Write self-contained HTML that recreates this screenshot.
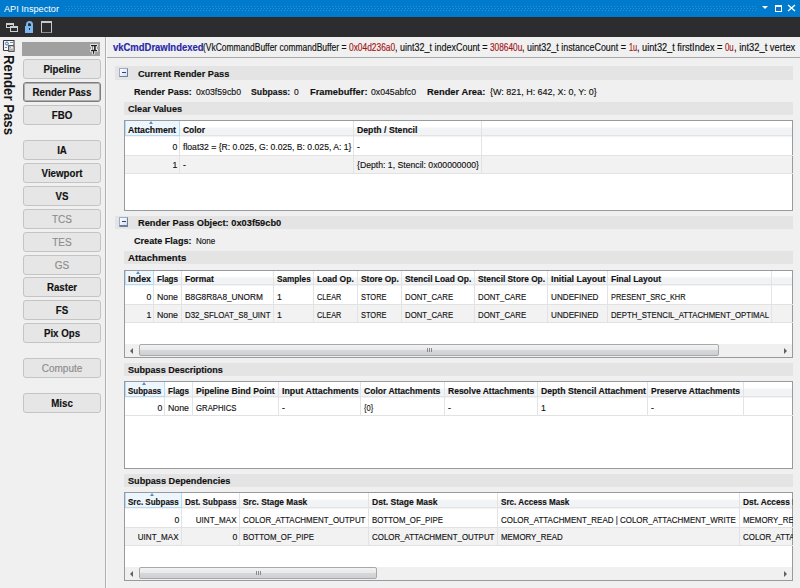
<!DOCTYPE html>
<html><head><meta charset="utf-8">
<style>
*{margin:0;padding:0;box-sizing:border-box}
html,body{width:800px;height:588px;overflow:hidden;background:#f0f0f0;font-family:"Liberation Sans",sans-serif;color:#000}
.a{position:absolute}
.t{position:absolute;white-space:nowrap;line-height:11px;color:#111;-webkit-text-stroke:0.15px currentColor}
.btn{position:absolute;left:23px;width:78px;height:20px;border:1px solid #c4c4c4;border-radius:3px;background:#e6e6e6}
.btn.sel{border:1px solid #7c7c7c;box-shadow:inset 0 0 0 1px #b0b0b0}
.mb{position:absolute;width:9px;height:9px;border:1px solid #9aacc8;border-right-color:#6d7f9e;border-bottom-color:#6d7f9e;border-radius:1px;background:linear-gradient(135deg,#ffffff,#d3ddef)}
.mb:after{content:"";position:absolute;left:2px;top:3px;width:4px;height:1px;background:#34466e}
</style></head><body>

<div class="a" style="left:0px;top:0px;width:800px;height:17px;background:#007acc;"></div>
<div class="t" style="top:2.97px;font-size:9.6px;color:#ffffff;left:4.00px;transform:scaleX(0.9543913716078979);transform-origin:0 0;-webkit-text-stroke:0">API Inspector</div>
<div class="a" style="left:64px;top:5px;width:693px;height:7px;background-image:radial-gradient(circle at 1.5px 1.5px,rgba(255,255,255,.18) 0.55px,transparent 1px),radial-gradient(circle at 3px 3.5px,rgba(255,255,255,.18) 0.55px,transparent 1px);background-size:3px 4px;"></div>
<div class="a" style="left:762px;top:6px;width:0;height:0;border-left:3.5px solid transparent;border-right:3.5px solid transparent;border-top:3.5px solid #fff"></div>
<div class="a" style="left:775px;top:5px;width:7px;height:7px;border:1px solid #fff;border-top-width:2px"></div>
<svg class="a" style="left:787px;top:4px" width="9" height="8"><path d="M1 1L8 7M8 1L1 7" stroke="#fff" stroke-width="1.4"/></svg>
<div class="a" style="left:0px;top:17px;width:800px;height:20px;background:#2d2d30;"></div>
<div class="a" style="left:6px;top:23px;width:8px;height:5px;border:1px solid #cfcfcf;border-top-width:2px"></div>
<div class="a" style="left:10px;top:26px;width:8px;height:6px;border:1px solid #cfcfcf;border-top-width:2px;background:#2d2d30"></div>
<div class="a" style="left:25.5px;top:21px;width:7px;height:7px;border:2px solid #79b8f3;border-bottom:none;border-radius:3.5px 3.5px 0 0"></div>
<div class="a" style="left:25px;top:26px;width:8px;height:7px;background:#79b8f3"></div>
<div class="a" style="left:28.5px;top:28px;width:1.5px;height:1.5px;background:#2d2d30;"></div>
<div class="a" style="left:41px;top:21px;width:11px;height:12px;border:1px solid #c8c8c8;border-top-width:2px;border-bottom-color:#8a8a8a"></div>
<svg class="a" style="left:2px;top:39px" width="14" height="14"><rect x="1.8" y="1.8" width="10" height="9.4" fill="#fafafa"/><path d="M1.5 11.5H6.5M1.5 1.5V11.5M1.5 1.5H12V6" fill="none" stroke="#3c3c3c" stroke-width="1.1"/><circle cx="4.9" cy="4.6" r="1.5" fill="#dfeaf8" stroke="#3a7bd0" stroke-width="1"/><path d="M8 3.5H11.5M3 8.5H5" stroke="#8a8a8a" stroke-width="1"/><rect x="6.7" y="6.7" width="5.4" height="5.6" fill="#f0f0f0" stroke="#3c3c3c" stroke-width="1.1"/><rect x="7.3" y="9.5" width="4.2" height="2.3" fill="#b0b0b0"/><path d="M7.5 7.5L9 9" stroke="#6aa0e0" stroke-width="1"/></svg>
<div class="a" style="left:17px;top:55.2px;transform-origin:0 0;transform:rotate(90deg) scaleX(0.881);font-size:15px;font-weight:bold;line-height:15px;white-space:nowrap;color:#151515">Render Pass</div>
<div class="a" style="left:105px;top:37px;width:1px;height:551px;background:#b0b0b0;"></div>
<div class="a" style="left:106px;top:37px;width:1px;height:551px;background:#fafafa;"></div>
<div class="a" style="left:22px;top:42px;width:78px;height:14px;background:#a0a0a0;"></div>
<svg class="a" style="left:89px;top:43px" width="10" height="12"><g fill="none" stroke="#f4f4f4" stroke-width="2.6" stroke-linecap="square"><path d="M2.5 2.5H7.5M3.5 2.5V7.5M6.5 2.5V7.5M2.5 7.5H7.5M4.5 7.5V10"/></g><rect x="2" y="2" width="6" height="1.2" fill="#1e1e1e"/><rect x="3.5" y="2.5" width="3.2" height="5" fill="#1e1e1e"/><rect x="2" y="7" width="6" height="1.2" fill="#1e1e1e"/><rect x="4" y="8" width="1.1" height="2.8" fill="#1e1e1e"/><rect x="4.1" y="3.2" width="1" height="3.6" fill="#fff"/></svg>
<div class="btn " style="top:59px"></div>
<div class="t" style="left:23px;width:78px;text-align:center;top:63.5px;font-size:10px;font-weight:bold;transform:scaleX(0.97)">Pipeline</div>
<div class="btn sel" style="top:82px"></div>
<div class="t" style="left:23px;width:78px;text-align:center;top:86.5px;font-size:10px;font-weight:bold;transform:scaleX(0.97)">Render Pass</div>
<div class="btn " style="top:105px"></div>
<div class="t" style="left:23px;width:78px;text-align:center;top:109.5px;font-size:10px;font-weight:bold;transform:scaleX(0.97)">FBO</div>
<div class="btn " style="top:140px"></div>
<div class="t" style="left:23px;width:78px;text-align:center;top:144.5px;font-size:10px;font-weight:bold;transform:scaleX(0.97)">IA</div>
<div class="btn " style="top:163px"></div>
<div class="t" style="left:23px;width:78px;text-align:center;top:167.5px;font-size:10px;font-weight:bold;transform:scaleX(0.97)">Viewport</div>
<div class="btn " style="top:186px"></div>
<div class="t" style="left:23px;width:78px;text-align:center;top:190.5px;font-size:10px;font-weight:bold;transform:scaleX(0.97)">VS</div>
<div class="btn dis" style="top:209px"></div>
<div class="t" style="left:23px;width:78px;text-align:center;top:213.5px;font-size:10px;color:#8d8d8d">TCS</div>
<div class="btn dis" style="top:232px"></div>
<div class="t" style="left:23px;width:78px;text-align:center;top:236.5px;font-size:10px;color:#8d8d8d">TES</div>
<div class="btn dis" style="top:255px"></div>
<div class="t" style="left:23px;width:78px;text-align:center;top:259.5px;font-size:10px;color:#8d8d8d">GS</div>
<div class="btn " style="top:277px"></div>
<div class="t" style="left:23px;width:78px;text-align:center;top:281.5px;font-size:10px;font-weight:bold;transform:scaleX(0.97)">Raster</div>
<div class="btn " style="top:300px"></div>
<div class="t" style="left:23px;width:78px;text-align:center;top:304.5px;font-size:10px;font-weight:bold;transform:scaleX(0.97)">FS</div>
<div class="btn " style="top:323px"></div>
<div class="t" style="left:23px;width:78px;text-align:center;top:327.5px;font-size:10px;font-weight:bold;transform:scaleX(0.97)">Pix Ops</div>
<div class="btn dis" style="top:358px"></div>
<div class="t" style="left:23px;width:78px;text-align:center;top:362.5px;font-size:10px;color:#8d8d8d">Compute</div>
<div class="btn " style="top:393px"></div>
<div class="t" style="left:23px;width:78px;text-align:center;top:397.5px;font-size:10px;font-weight:bold;transform:scaleX(0.97)">Misc</div>
<div class="t" style="top:41.73px;font-size:10px;font-weight:bold;color:#2828a8;left:112.50px;transform:scaleX(0.947);transform-origin:0 0;">vkCmdDrawIndexed</div>
<div class="t" style="top:41.73px;font-size:10px;left:203.00px;transform:scaleX(0.8463596012092925);transform-origin:0 0;">(VkCommandBuffer&#32;commandBuffer&#32;=&#32;</div>
<div class="t" style="top:41.73px;font-size:10px;color:#a31515;left:348.75px;transform:scaleX(0.8382669308009736);transform-origin:0 0;">0x04d236a0</div>
<div class="t" style="top:41.73px;font-size:10px;left:394.90px;transform:scaleX(0.8979454540626193);transform-origin:0 0;">,&#32;uint32_t&#32;indexCount&#32;=&#32;</div>
<div class="t" style="top:41.73px;font-size:10px;color:#a31515;left:490.00px;transform:scaleX(0.8296743431878556);transform-origin:0 0;">308640u</div>
<div class="t" style="top:41.73px;font-size:10px;left:522.30px;transform:scaleX(0.8926753399223526);transform-origin:0 0;">,&#32;uint32_t&#32;instanceCount&#32;=&#32;</div>
<div class="t" style="top:41.73px;font-size:10px;color:#a31515;left:628.75px;transform:scaleX(0.7416980389953363);transform-origin:0 0;">1u</div>
<div class="t" style="top:41.73px;font-size:10px;left:637.00px;transform:scaleX(0.917730182112083);transform-origin:0 0;">,&#32;uint32_t&#32;firstIndex&#32;=&#32;</div>
<div class="t" style="top:41.73px;font-size:10px;color:#a31515;left:725.00px;transform:scaleX(0.786649435298084);transform-origin:0 0;">0u</div>
<div class="t" style="top:41.73px;font-size:10px;left:733.75px;transform:scaleX(0.9338180293580954);transform-origin:0 0;">,&#32;int32_t&#32;vertex</div>
<div class="a" style="left:107px;top:57px;width:693px;height:1px;background:#a8a8a8;"></div>
<div class="a" style="left:115px;top:66px;width:678px;height:14px;background:#e4e4e4;"></div>
<div class="mb" style="left:119px;top:68px"></div>
<div class="t" style="top:67.91px;font-size:9.5px;font-weight:bold;left:137.50px;transform:scaleX(0.9655668766251057);transform-origin:0 0;">Current Render Pass</div>
<div class="t" style="top:85.91px;font-size:9.5px;font-weight:bold;left:133.75px;transform:scaleX(0.9510777787856389);transform-origin:0 0;">Render Pass:</div>
<div class="t" style="top:85.80px;font-size:9.8px;left:195.50px;transform:scaleX(0.8880112377822139);transform-origin:0 0;">0x03f59cb0</div>
<div class="t" style="top:85.91px;font-size:9.5px;font-weight:bold;left:250.75px;transform:scaleX(0.9179214851911165);transform-origin:0 0;">Subpass:</div>
<div class="t" style="top:85.80px;font-size:9.8px;left:294.25px;transform:scaleX(0.87);transform-origin:0 0;">0</div>
<div class="t" style="top:85.91px;font-size:9.5px;font-weight:bold;left:309.50px;transform:scaleX(0.9813727190917928);transform-origin:0 0;">Framebuffer:</div>
<div class="t" style="top:85.80px;font-size:9.8px;left:371.25px;transform:scaleX(0.8880112377822139);transform-origin:0 0;">0x045abfc0</div>
<div class="t" style="top:85.91px;font-size:9.5px;font-weight:bold;left:426.75px;transform:scaleX(0.9821993493192775);transform-origin:0 0;">Render Area:</div>
<div class="t" style="top:85.80px;font-size:9.8px;left:489.50px;transform:scaleX(0.9141730162351882);transform-origin:0 0;">{W: 821, H: 642, X: 0, Y: 0}</div>
<div class="a" style="left:124px;top:102px;width:669px;height:13px;background:#e4e4e4;"></div>
<div class="t" style="top:103.21px;font-size:9.5px;font-weight:bold;left:128.00px;transform:scaleX(0.9556080519379612);transform-origin:0 0;">Clear Values</div>
<div class="a" style="left:0;top:0;width:800px;height:588px;clip-path:inset(120px 7px 377px 124px)">
<div class="a" style="left:124px;top:120px;width:669px;height:91px;border:1px solid #979aa0;background:#fff;box-sizing:border-box"></div>
<div class="a" style="left:125px;top:121px;width:667px;height:14px;background:linear-gradient(#ffffff 0,#ffffff 40%,#f2f3f5 55%,#f2f3f5 100%)"></div>
<div class="a" style="left:125px;top:135px;width:667px;height:1px;background:#e3e4e6;"></div>
<div class="a" style="left:125px;top:136px;width:667px;height:1px;background:#f3f3f3;"></div>
<div class="a" style="left:125px;top:155px;width:668px;height:1px;background:#e2e2e2;"></div>
<div class="a" style="left:125px;top:156px;width:667px;height:17px;background:#f2f2f2;"></div>
<div class="a" style="left:125px;top:173px;width:668px;height:1px;background:#e2e2e2;"></div>
<div class="a" style="left:179px;top:121px;width:1px;height:53px;background:#e2e3e5;"></div>
<div class="a" style="left:353px;top:121px;width:1px;height:53px;background:#e2e3e5;"></div>
<div class="a" style="left:481px;top:121px;width:1px;height:53px;background:#e2e3e5;"></div>
<div class="a" style="left:125px;top:121px;width:55px;height:15px;background:#eef6fd;border:1px solid #b4dcf7;border-top:none;box-sizing:border-box"></div>
<div class="a" style="left:149.0px;top:121px;width:0;height:0;border-left:2.5px solid transparent;border-right:2.5px solid transparent;border-bottom:3px solid #5b8cc0"></div>
<div class="t" style="top:123.51px;font-size:9.5px;font-weight:bold;left:127.50px;transform:scaleX(0.9185715614191572);transform-origin:0 0;">Attachment</div>
<div class="t" style="top:123.51px;font-size:9.5px;font-weight:bold;left:182.50px;transform:scaleX(0.8869889183081946);transform-origin:0 0;">Color</div>
<div class="t" style="top:123.51px;font-size:9.5px;font-weight:bold;left:356.50px;transform:scaleX(0.9154182954360042);transform-origin:0 0;">Depth / Stencil</div>
<div class="t" style="top:140.80px;font-size:9.8px;right:623.00px;transform:scaleX(0.888);transform-origin:100% 0;">0</div>
<div class="t" style="top:140.80px;font-size:9.8px;left:182.50px;transform:scaleX(0.8798422654293525);transform-origin:0 0;">float32 = {R: 0.025, G: 0.025, B: 0.025, A: 1}</div>
<div class="t" style="top:140.80px;font-size:9.8px;left:356.50px;transform:scaleX(0.888);transform-origin:0 0;">-</div>
<div class="t" style="top:159.10px;font-size:9.8px;right:623.00px;transform:scaleX(0.888);transform-origin:100% 0;">1</div>
<div class="t" style="top:159.10px;font-size:9.8px;left:182.50px;transform:scaleX(0.888);transform-origin:0 0;">-</div>
<div class="t" style="top:159.10px;font-size:9.8px;left:356.50px;transform:scaleX(0.8850119842728111);transform-origin:0 0;">{Depth: 1, Stencil: 0x00000000}</div>
</div>
<div class="a" style="left:115px;top:216px;width:678px;height:13px;background:#e4e4e4;"></div>
<div class="mb" style="left:119px;top:218px"></div>
<div class="t" style="top:217.01px;font-size:9.5px;font-weight:bold;left:137.60px;transform:scaleX(0.9758425223485553);transform-origin:0 0;">Render Pass Object: 0x03f59cb0</div>
<div class="mb" style="left:119px;top:217px"></div>
<div class="t" style="top:234.91px;font-size:9.5px;font-weight:bold;left:133.80px;transform:scaleX(0.955354195620973);transform-origin:0 0;">Create Flags:</div>
<div class="t" style="top:234.80px;font-size:9.8px;left:195.75px;transform:scaleX(0.8216566278278292);transform-origin:0 0;">None</div>
<div class="a" style="left:124px;top:251px;width:669px;height:13px;background:#e4e4e4;"></div>
<div class="t" style="top:252.21px;font-size:9.5px;font-weight:bold;left:128.00px;transform:scaleX(1.0123650836151645);transform-origin:0 0;">Attachments</div>
<div class="a" style="left:0;top:0;width:800px;height:588px;clip-path:inset(270px 7px 230px 124px)">
<div class="a" style="left:124px;top:270px;width:669px;height:88px;border:1px solid #979aa0;background:#fff;box-sizing:border-box"></div>
<div class="a" style="left:125px;top:271px;width:667px;height:13px;background:linear-gradient(#ffffff 0,#ffffff 40%,#f2f3f5 55%,#f2f3f5 100%)"></div>
<div class="a" style="left:125px;top:284px;width:667px;height:1px;background:#e3e4e6;"></div>
<div class="a" style="left:125px;top:285px;width:667px;height:1px;background:#f3f3f3;"></div>
<div class="a" style="left:125px;top:304px;width:668px;height:1px;background:#e2e2e2;"></div>
<div class="a" style="left:125px;top:305px;width:667px;height:17px;background:#f2f2f2;"></div>
<div class="a" style="left:125px;top:322px;width:668px;height:1px;background:#e2e2e2;"></div>
<div class="a" style="left:153px;top:271px;width:1px;height:52px;background:#e2e3e5;"></div>
<div class="a" style="left:181px;top:271px;width:1px;height:52px;background:#e2e3e5;"></div>
<div class="a" style="left:273px;top:271px;width:1px;height:52px;background:#e2e3e5;"></div>
<div class="a" style="left:313px;top:271px;width:1px;height:52px;background:#e2e3e5;"></div>
<div class="a" style="left:357px;top:271px;width:1px;height:52px;background:#e2e3e5;"></div>
<div class="a" style="left:401px;top:271px;width:1px;height:52px;background:#e2e3e5;"></div>
<div class="a" style="left:474px;top:271px;width:1px;height:52px;background:#e2e3e5;"></div>
<div class="a" style="left:547px;top:271px;width:1px;height:52px;background:#e2e3e5;"></div>
<div class="a" style="left:607px;top:271px;width:1px;height:52px;background:#e2e3e5;"></div>
<div class="a" style="left:771px;top:271px;width:1px;height:52px;background:#e2e3e5;"></div>
<div class="a" style="left:125px;top:271px;width:29px;height:14px;background:#eef6fd;border:1px solid #b4dcf7;border-top:none;box-sizing:border-box"></div>
<div class="a" style="left:136.0px;top:271px;width:0;height:0;border-left:2.5px solid transparent;border-right:2.5px solid transparent;border-bottom:3px solid #5b8cc0"></div>
<div class="t" style="top:273.01px;font-size:9.5px;font-weight:bold;left:127.50px;transform:scaleX(0.9269571027300838);transform-origin:0 0;">Index</div>
<div class="t" style="top:273.01px;font-size:9.5px;font-weight:bold;left:156.50px;transform:scaleX(0.8463521372752939);transform-origin:0 0;">Flags</div>
<div class="t" style="top:273.01px;font-size:9.5px;font-weight:bold;left:184.50px;transform:scaleX(0.8929366526959286);transform-origin:0 0;">Format</div>
<div class="t" style="top:273.01px;font-size:9.5px;font-weight:bold;left:276.50px;transform:scaleX(0.8636944249124661);transform-origin:0 0;">Samples</div>
<div class="t" style="top:273.01px;font-size:9.5px;font-weight:bold;left:316.50px;transform:scaleX(0.8927780066871046);transform-origin:0 0;">Load Op.</div>
<div class="t" style="top:273.01px;font-size:9.5px;font-weight:bold;left:360.50px;transform:scaleX(0.8829428309135243);transform-origin:0 0;">Store Op.</div>
<div class="t" style="top:273.01px;font-size:9.5px;font-weight:bold;left:404.50px;transform:scaleX(0.883900410690567);transform-origin:0 0;">Stencil Load Op.</div>
<div class="t" style="top:273.01px;font-size:9.5px;font-weight:bold;left:477.50px;transform:scaleX(0.875325159413083);transform-origin:0 0;">Stencil Store Op.</div>
<div class="t" style="top:273.01px;font-size:9.5px;font-weight:bold;left:550.50px;transform:scaleX(0.9302460791581273);transform-origin:0 0;">Initial Layout</div>
<div class="t" style="top:273.01px;font-size:9.5px;font-weight:bold;left:610.50px;transform:scaleX(0.8936984761882419);transform-origin:0 0;">Final Layout</div>
<div class="t" style="top:291.00px;font-size:9.8px;right:649.00px;transform:scaleX(0.888);transform-origin:100% 0;">0</div>
<div class="t" style="top:291.00px;font-size:9.8px;left:156.50px;transform:scaleX(0.8963526849030865);transform-origin:0 0;">None</div>
<div class="t" style="top:291.00px;font-size:9.8px;left:184.50px;transform:scaleX(0.8474302069417096);transform-origin:0 0;">B8G8R8A8_UNORM</div>
<div class="t" style="top:291.00px;font-size:9.8px;left:276.50px;transform:scaleX(0.888);transform-origin:0 0;">1</div>
<div class="t" style="top:291.00px;font-size:9.8px;left:316.50px;transform:scaleX(0.7420872082526218);transform-origin:0 0;">CLEAR</div>
<div class="t" style="top:291.00px;font-size:9.8px;left:360.50px;transform:scaleX(0.7593250419257227);transform-origin:0 0;">STORE</div>
<div class="t" style="top:291.00px;font-size:9.8px;left:404.50px;transform:scaleX(0.7958088092085089);transform-origin:0 0;">DONT_CARE</div>
<div class="t" style="top:291.00px;font-size:9.8px;left:477.50px;transform:scaleX(0.7958088092085089);transform-origin:0 0;">DONT_CARE</div>
<div class="t" style="top:291.00px;font-size:9.8px;left:550.50px;transform:scaleX(0.830875599665332);transform-origin:0 0;">UNDEFINED</div>
<div class="t" style="top:291.00px;font-size:9.8px;left:610.50px;transform:scaleX(0.7568207391201627);transform-origin:0 0;">PRESENT_SRC_KHR</div>
<div class="t" style="top:309.10px;font-size:9.8px;right:649.00px;transform:scaleX(0.888);transform-origin:100% 0;">1</div>
<div class="t" style="top:309.10px;font-size:9.8px;left:156.50px;transform:scaleX(0.8963526849030865);transform-origin:0 0;">None</div>
<div class="t" style="top:309.10px;font-size:9.8px;left:184.50px;transform:scaleX(0.8022830583065371);transform-origin:0 0;">D32_SFLOAT_S8_UINT</div>
<div class="t" style="top:309.10px;font-size:9.8px;left:276.50px;transform:scaleX(0.888);transform-origin:0 0;">1</div>
<div class="t" style="top:309.10px;font-size:9.8px;left:316.50px;transform:scaleX(0.7420872082526218);transform-origin:0 0;">CLEAR</div>
<div class="t" style="top:309.10px;font-size:9.8px;left:360.50px;transform:scaleX(0.7593250419257227);transform-origin:0 0;">STORE</div>
<div class="t" style="top:309.10px;font-size:9.8px;left:404.50px;transform:scaleX(0.7958088092085089);transform-origin:0 0;">DONT_CARE</div>
<div class="t" style="top:309.10px;font-size:9.8px;left:477.50px;transform:scaleX(0.7958088092085089);transform-origin:0 0;">DONT_CARE</div>
<div class="t" style="top:309.10px;font-size:9.8px;left:550.50px;transform:scaleX(0.830875599665332);transform-origin:0 0;">UNDEFINED</div>
<div class="t" style="top:309.10px;font-size:9.8px;left:610.50px;transform:scaleX(0.7925597637560313);transform-origin:0 0;">DEPTH_STENCIL_ATTACHMENT_OPTIMAL</div>
<div class="a" style="left:125px;top:344px;width:667px;height:13px;background:#f0f0f0;"></div>
<div class="a" style="left:139px;top:344px;width:580px;height:12px;background:linear-gradient(#f2f2f3 0,#e9eaeb 45%,#d6d7d9 55%,#cfd0d2 100%);border:1px solid #a8a8a8;border-radius:2px;box-sizing:border-box"></div>
<div class="a" style="left:130px;top:347.5px;width:0;height:0;border-top:3px solid transparent;border-bottom:3px solid transparent;border-right:3px solid #606060"></div>
<div class="a" style="left:784px;top:347.5px;width:0;height:0;border-top:3px solid transparent;border-bottom:3px solid transparent;border-left:3px solid #606060"></div>
<div class="a" style="left:427px;top:348px;width:1px;height:4px;background:#8a8a8a;"></div>
<div class="a" style="left:429px;top:348px;width:1px;height:4px;background:#8a8a8a;"></div>
<div class="a" style="left:431px;top:348px;width:1px;height:4px;background:#8a8a8a;"></div>
</div>
<div class="a" style="left:124px;top:363px;width:669px;height:13px;background:#e4e4e4;"></div>
<div class="t" style="top:363.71px;font-size:9.5px;font-weight:bold;left:128.00px;transform:scaleX(0.9511081162786673);transform-origin:0 0;">Subpass Descriptions</div>
<div class="a" style="left:0;top:0;width:800px;height:588px;clip-path:inset(381px 7px 119px 124px)">
<div class="a" style="left:124px;top:381px;width:669px;height:88px;border:1px solid #979aa0;background:#fff;box-sizing:border-box"></div>
<div class="a" style="left:125px;top:382px;width:667px;height:14px;background:linear-gradient(#ffffff 0,#ffffff 40%,#f2f3f5 55%,#f2f3f5 100%)"></div>
<div class="a" style="left:125px;top:396px;width:667px;height:1px;background:#e3e4e6;"></div>
<div class="a" style="left:125px;top:397px;width:667px;height:1px;background:#f3f3f3;"></div>
<div class="a" style="left:125px;top:415px;width:668px;height:1px;background:#e2e2e2;"></div>
<div class="a" style="left:164px;top:382px;width:1px;height:34px;background:#e2e3e5;"></div>
<div class="a" style="left:192px;top:382px;width:1px;height:34px;background:#e2e3e5;"></div>
<div class="a" style="left:278px;top:382px;width:1px;height:34px;background:#e2e3e5;"></div>
<div class="a" style="left:360px;top:382px;width:1px;height:34px;background:#e2e3e5;"></div>
<div class="a" style="left:444px;top:382px;width:1px;height:34px;background:#e2e3e5;"></div>
<div class="a" style="left:537px;top:382px;width:1px;height:34px;background:#e2e3e5;"></div>
<div class="a" style="left:647px;top:382px;width:1px;height:34px;background:#e2e3e5;"></div>
<div class="a" style="left:743px;top:382px;width:1px;height:34px;background:#e2e3e5;"></div>
<div class="a" style="left:125px;top:382px;width:40px;height:15px;background:#eef6fd;border:1px solid #b4dcf7;border-top:none;box-sizing:border-box"></div>
<div class="a" style="left:141.5px;top:382px;width:0;height:0;border-left:2.5px solid transparent;border-right:2.5px solid transparent;border-bottom:3px solid #5b8cc0"></div>
<div class="t" style="top:384.91px;font-size:9.5px;font-weight:bold;left:127.50px;transform:scaleX(0.8397312859884836);transform-origin:0 0;">Subpass</div>
<div class="t" style="top:384.91px;font-size:9.5px;font-weight:bold;left:167.50px;transform:scaleX(0.8463521372752939);transform-origin:0 0;">Flags</div>
<div class="t" style="top:384.91px;font-size:9.5px;font-weight:bold;left:195.50px;transform:scaleX(0.9097954918730804);transform-origin:0 0;">Pipeline Bind Point</div>
<div class="t" style="top:384.91px;font-size:9.5px;font-weight:bold;left:281.50px;transform:scaleX(0.9242820678553251);transform-origin:0 0;">Input Attachments</div>
<div class="t" style="top:384.91px;font-size:9.5px;font-weight:bold;left:363.50px;transform:scaleX(0.9009980399600015);transform-origin:0 0;">Color Attachments</div>
<div class="t" style="top:384.91px;font-size:9.5px;font-weight:bold;left:447.50px;transform:scaleX(0.8959892792934929);transform-origin:0 0;">Resolve Attachments</div>
<div class="t" style="top:384.91px;font-size:9.5px;font-weight:bold;left:540.50px;transform:scaleX(0.9111110809817765);transform-origin:0 0;">Depth Stencil Attachment</div>
<div class="t" style="top:384.91px;font-size:9.5px;font-weight:bold;left:650.50px;transform:scaleX(0.8902381387021028);transform-origin:0 0;">Preserve Attachments</div>
<div class="t" style="top:402.30px;font-size:9.8px;right:638.00px;transform:scaleX(0.888);transform-origin:100% 0;">0</div>
<div class="t" style="top:402.30px;font-size:9.8px;left:167.50px;transform:scaleX(0.8963526849030865);transform-origin:0 0;">None</div>
<div class="t" style="top:402.30px;font-size:9.8px;left:195.50px;transform:scaleX(0.791215215605841);transform-origin:0 0;">GRAPHICS</div>
<div class="t" style="top:402.30px;font-size:9.8px;left:281.50px;transform:scaleX(0.888);transform-origin:0 0;">-</div>
<div class="t" style="top:402.30px;font-size:9.8px;left:363.50px;transform:scaleX(0.7710630458657475);transform-origin:0 0;">{0}</div>
<div class="t" style="top:402.30px;font-size:9.8px;left:447.50px;transform:scaleX(0.888);transform-origin:0 0;">-</div>
<div class="t" style="top:402.30px;font-size:9.8px;left:540.50px;transform:scaleX(0.888);transform-origin:0 0;">1</div>
<div class="t" style="top:402.30px;font-size:9.8px;left:650.50px;transform:scaleX(0.888);transform-origin:0 0;">-</div>
</div>
<div class="a" style="left:124px;top:474px;width:669px;height:13px;background:#e4e4e4;"></div>
<div class="t" style="top:475.21px;font-size:9.5px;font-weight:bold;left:128.00px;transform:scaleX(0.960165004918692);transform-origin:0 0;">Subpass Dependencies</div>
<div class="a" style="left:0;top:0;width:800px;height:588px;clip-path:inset(492px 7px 7px 124px)">
<div class="a" style="left:124px;top:492px;width:669px;height:89px;border:1px solid #979aa0;background:#fff;box-sizing:border-box"></div>
<div class="a" style="left:125px;top:493px;width:667px;height:14px;background:linear-gradient(#ffffff 0,#ffffff 40%,#f2f3f5 55%,#f2f3f5 100%)"></div>
<div class="a" style="left:125px;top:507px;width:667px;height:1px;background:#e3e4e6;"></div>
<div class="a" style="left:125px;top:508px;width:667px;height:1px;background:#f3f3f3;"></div>
<div class="a" style="left:125px;top:527px;width:668px;height:1px;background:#e2e2e2;"></div>
<div class="a" style="left:125px;top:528px;width:667px;height:17px;background:#f2f2f2;"></div>
<div class="a" style="left:125px;top:545px;width:668px;height:1px;background:#e2e2e2;"></div>
<div class="a" style="left:181px;top:493px;width:1px;height:53px;background:#e2e3e5;"></div>
<div class="a" style="left:239px;top:493px;width:1px;height:53px;background:#e2e3e5;"></div>
<div class="a" style="left:368px;top:493px;width:1px;height:53px;background:#e2e3e5;"></div>
<div class="a" style="left:497px;top:493px;width:1px;height:53px;background:#e2e3e5;"></div>
<div class="a" style="left:739px;top:493px;width:1px;height:53px;background:#e2e3e5;"></div>
<div class="a" style="left:125px;top:493px;width:57px;height:15px;background:#eef6fd;border:1px solid #b4dcf7;border-top:none;box-sizing:border-box"></div>
<div class="a" style="left:150.0px;top:493px;width:0;height:0;border-left:2.5px solid transparent;border-right:2.5px solid transparent;border-bottom:3px solid #5b8cc0"></div>
<div class="t" style="top:495.61px;font-size:9.5px;font-weight:bold;left:127.50px;transform:scaleX(0.8431394588487979);transform-origin:0 0;">Src. Subpass</div>
<div class="t" style="top:495.61px;font-size:9.5px;font-weight:bold;left:184.50px;transform:scaleX(0.8557304864370873);transform-origin:0 0;">Dst. Subpass</div>
<div class="t" style="top:495.61px;font-size:9.5px;font-weight:bold;left:242.50px;transform:scaleX(0.8817155628907962);transform-origin:0 0;">Src. Stage Mask</div>
<div class="t" style="top:495.61px;font-size:9.5px;font-weight:bold;left:371.50px;transform:scaleX(0.8989831004258697);transform-origin:0 0;">Dst. Stage Mask</div>
<div class="t" style="top:495.61px;font-size:9.5px;font-weight:bold;left:500.50px;transform:scaleX(0.8533033050645334);transform-origin:0 0;">Src. Access Mask</div>
<div class="t" style="top:495.61px;font-size:9.5px;font-weight:bold;left:742.50px;transform:scaleX(0.8759253672483293);transform-origin:0 0;">Dst. Access Mask</div>
<div class="t" style="top:513.80px;font-size:9.8px;right:621.00px;transform:scaleX(0.888);transform-origin:100% 0;">0</div>
<div class="t" style="top:513.80px;font-size:9.8px;right:563.00px;transform:scaleX(0.8223910338186868);transform-origin:100% 0;">UINT_MAX</div>
<div class="t" style="top:513.80px;font-size:9.8px;left:242.50px;transform:scaleX(0.8083314724869226);transform-origin:0 0;">COLOR_ATTACHMENT_OUTPUT</div>
<div class="t" style="top:513.80px;font-size:9.8px;left:371.50px;transform:scaleX(0.8015057301133357);transform-origin:0 0;">BOTTOM_OF_PIPE</div>
<div class="t" style="top:513.80px;font-size:9.8px;left:500.50px;transform:scaleX(0.8122716532369105);transform-origin:0 0;">COLOR_ATTACHMENT_READ | COLOR_ATTACHMENT_WRITE</div>
<div class="t" style="top:513.80px;font-size:9.8px;left:742.50px;transform:scaleX(0.8054683730868799);transform-origin:0 0;">MEMORY_READ</div>
<div class="t" style="top:531.40px;font-size:9.8px;right:621.00px;transform:scaleX(0.8223910338186868);transform-origin:100% 0;">UINT_MAX</div>
<div class="t" style="top:531.40px;font-size:9.8px;right:563.00px;transform:scaleX(0.888);transform-origin:100% 0;">0</div>
<div class="t" style="top:531.40px;font-size:9.8px;left:242.50px;transform:scaleX(0.8015057301133357);transform-origin:0 0;">BOTTOM_OF_PIPE</div>
<div class="t" style="top:531.40px;font-size:9.8px;left:371.50px;transform:scaleX(0.8083314724869226);transform-origin:0 0;">COLOR_ATTACHMENT_OUTPUT</div>
<div class="t" style="top:531.40px;font-size:9.8px;left:500.50px;transform:scaleX(0.8054683730868799);transform-origin:0 0;">MEMORY_READ</div>
<div class="t" style="top:531.40px;font-size:9.8px;left:742.50px;transform:scaleX(0.8087338197951502);transform-origin:0 0;">COLOR_ATTACHMENT_READ</div>
<div class="a" style="left:125px;top:567px;width:667px;height:13px;background:#f0f0f0;"></div>
<div class="a" style="left:139px;top:567px;width:238px;height:12px;background:linear-gradient(#f2f2f3 0,#e9eaeb 45%,#d6d7d9 55%,#cfd0d2 100%);border:1px solid #a8a8a8;border-radius:2px;box-sizing:border-box"></div>
<div class="a" style="left:130px;top:570.5px;width:0;height:0;border-top:3px solid transparent;border-bottom:3px solid transparent;border-right:3px solid #606060"></div>
<div class="a" style="left:784px;top:570.5px;width:0;height:0;border-top:3px solid transparent;border-bottom:3px solid transparent;border-left:3px solid #606060"></div>
<div class="a" style="left:256px;top:571px;width:1px;height:4px;background:#8a8a8a;"></div>
<div class="a" style="left:258px;top:571px;width:1px;height:4px;background:#8a8a8a;"></div>
<div class="a" style="left:260px;top:571px;width:1px;height:4px;background:#8a8a8a;"></div>
</div>
</body></html>
